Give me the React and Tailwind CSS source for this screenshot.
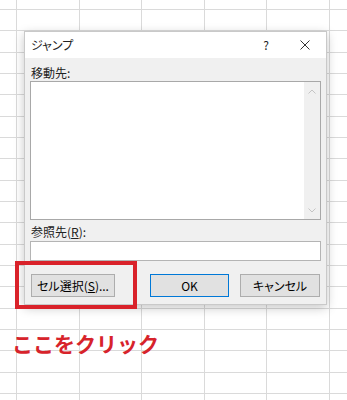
import React from 'react';

const cols = 7;
const rows = 20;

const Chevron = ({ down }) => (
  <svg width="8" height="5" viewBox="0 0 8 5" className="block">
    <path
      d={down ? 'M0.5 0.5 L4 4 L7.5 0.5' : 'M0.5 4.5 L4 1 L7.5 4.5'}
      fill="none"
      stroke="#c4c4c4"
      strokeWidth="1"
    />
  </svg>
);

const Button = ({ children, primary }) => (
  <button
    className={`w-full h-[23px] text-[12px] leading-none text-black bg-[#e1e1e1] border ${
      primary ? 'border-[#0078d7]' : 'border-[#adadad]'
    } flex items-center justify-center`}
  >
    {children}
  </button>
);

export default function App() {
  return (
    <div
      className="relative w-[347px] h-[400px] overflow-hidden bg-white [font-feature-settings:'palt']"
      style={{ fontFamily: '"Noto Sans CJK JP", "Noto Sans", sans-serif' }}
    >
      {/* spreadsheet grid behind the dialog */}
      <div className="absolute inset-0 grid grid-cols-[17px_repeat(6,62.6px)] grid-rows-[10px_repeat(19,21.33px)]">
        {Array.from({ length: cols * rows }, (_, i) => (
          <div key={i} className="border-r border-b border-[#dadada]" />
        ))}
      </div>

      <div className="relative pt-[31px]">
        {/* dialog */}
        <div className="ml-[24px] w-[303px] border border-[#c9c9c9] bg-[#f0f0f0] shadow-[0_3px_10px_rgba(0,0,0,0.22)]">
          <div className="h-[26px] bg-white flex items-center pl-[6px] pr-[16px] text-[12px] text-[#222]">
            <span>ジャンプ</span>
            <span className="ml-auto mr-[31px] text-[12px]">?</span>
            <svg width="10" height="10" viewBox="0 0 10 10">
              <path d="M0.5 0.5 L9.5 9.5 M9.5 0.5 L0.5 9.5" stroke="#333" strokeWidth="1" />
            </svg>
          </div>

          <div className="px-[5px] pt-[7px] pb-[7px]">
            <div className="h-4 leading-4 text-[12px] text-[#222] pl-[1px]">移動先:</div>
            <div className="h-[139px] bg-white border border-[#a8a8a8] flex">
              <div className="flex-1" />
              <div className="w-[16px] bg-[#f0f0f0] flex flex-col items-center justify-between pt-[7px] pb-[6px]">
                <Chevron />
                <Chevron down />
              </div>
            </div>

            <div className="mt-[4px] h-4 leading-4 text-[12px] text-[#222] pl-[1px]">
              参照先(<span className="underline">R</span>):
            </div>
            <div className="mt-[1px] h-[20px] bg-white border border-[#b4b4b4]" />

            <div className="mt-[13px] flex">
              <div className="ml-[1px] w-[84px]">
                <Button>
                  セル選択(<span className="underline">S</span>)...
                </Button>
              </div>
              <div className="ml-[35px] w-[79px]">
                <Button primary>OK</Button>
              </div>
              <div className="ml-[11px] w-[80px]">
                <Button>キャンセル</Button>
              </div>
            </div>
          </div>
        </div>

        <div className="ml-[12px] mt-[24px] h-[28px] leading-[28px] text-[21px] font-bold text-[#d7232b] [font-feature-settings:normal]">
          ここをクリック
        </div>

        {/* red highlight around the cell select button */}
        <div className="absolute left-[15px] top-[261px] w-[122px] h-[48px] border-4 border-[#d9222a]" />
      </div>
    </div>
  );
}
